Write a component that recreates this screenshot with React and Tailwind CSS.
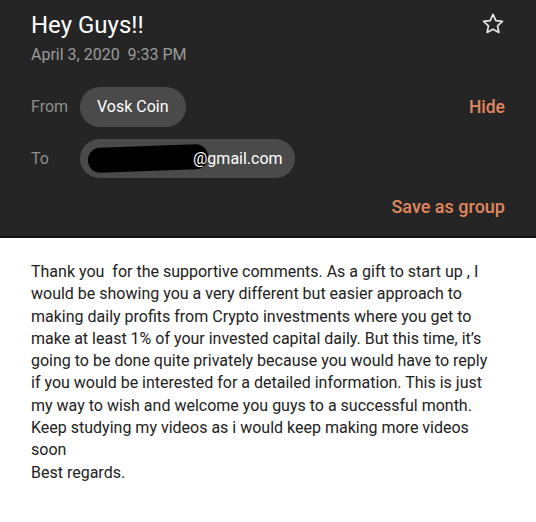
import React from 'react';

const Star = () => (
  <svg width="26" height="26" viewBox="0 0 24 24" fill="none" stroke="#e6e6e6" strokeWidth="1.6" strokeLinejoin="round">
    <path d="M12 3.2l2.6 5.6 6.1.7-4.5 4.2 1.2 6.1L12 16.8l-5.4 3 1.2-6.1-4.5-4.2 6.1-.7z" />
  </svg>
);

const lines = [
  'Thank you\u00a0 for the supportive comments. As a gift to start up , I',
  'would be showing you a very different but easier approach to',
  'making daily profits from Crypto investments where you get to',
  'make at least 1% of your invested capital daily. But this time, it’s',
  'going to be done quite privately because you would have to reply',
  'if you would be interested for a detailed information. This is just',
  'my way to wish and welcome you guys to a successful month.',
  'Keep studying my videos as i would keep making more videos',
  'soon',
  'Best regards.',
];

const App = () => {
  return (
    <div className="w-[536px] h-[522px] bg-white font-['Roboto','Liberation_Sans',sans-serif] overflow-hidden">
      {/* Header */}
      <header className="bg-[#252525] h-[238px] px-[31px] pt-[9px] border-b-2 border-[#111]">
        <div className="flex justify-between items-start">
          <div>
            <h1 className="text-[24px] leading-[30px] font-normal text-white mt-[1px]">Hey Guys!!</h1>
            <p className="text-[16px] leading-[24px] text-[#9b9b9b] mt-[3px]">April 3, 2020&nbsp; 9:33 PM</p>
          </div>
          <div className="mt-[2px] mr-[-1px]"><Star /></div>
        </div>

        <div className="flex items-center justify-between mt-[20px]">
          <div className="flex items-center">
            <span className="w-[49px] text-[16px] text-[#8f8f8f]">From</span>
            <span className="h-[40px] px-[17px] rounded-full bg-[#4a4a4a] text-white text-[16px] flex items-center">Vosk Coin</span>
          </div>
          <button className="text-[17.5px] font-medium text-[#e0875f]">Hide</button>
        </div>

        <div className="flex items-center mt-[12px]">
          <span className="w-[49px] text-[16px] text-[#8f8f8f]">To</span>
          <span className="relative h-[39px] w-[215px] pl-[113px] rounded-full bg-[#4a4a4a] text-white text-[16px] flex items-center">
            <span className="absolute left-[8px] top-[7px] w-[120px] h-[25px] bg-black rounded-[12px] -rotate-2" />
            <span className="relative">@gmail.com</span>
          </span>
        </div>

        <div className="flex justify-end mt-[15px]">
          <button className="text-[18px] font-medium text-[#e0875f]">Save as group</button>
        </div>
      </header>

      {/* Body */}
      <main className="px-[31px] pt-[23px] text-[16px] leading-[22.3px] text-[#222] whitespace-nowrap">
        {lines.map((l, i) => (
          <p key={i}>{l}</p>
        ))}
      </main>
    </div>
  );
};

export default App;
